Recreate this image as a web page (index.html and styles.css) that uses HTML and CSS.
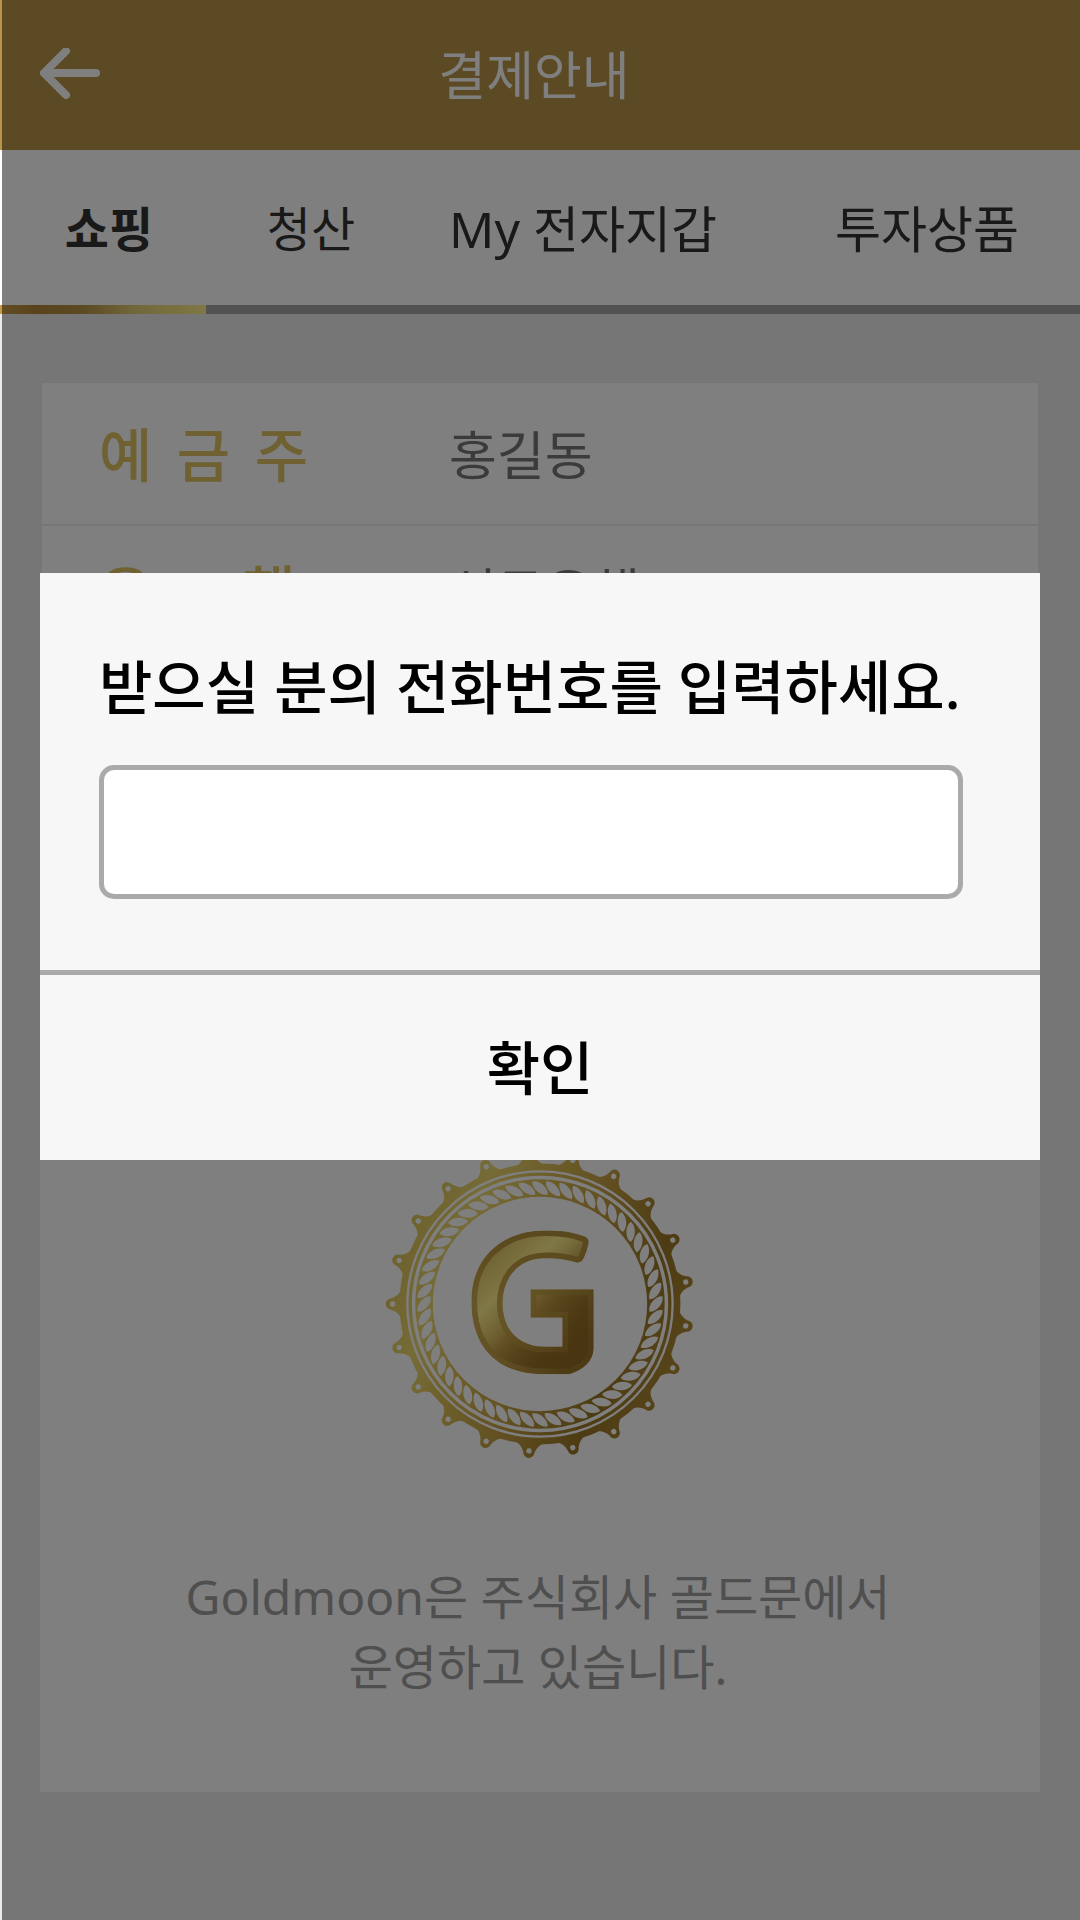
FILE: index.html
```html
<!DOCTYPE html>
<html lang="ko">
<head>
<meta charset="utf-8">
<meta name="viewport" content="width=device-width, initial-scale=1">
<title>결제안내</title>
<link rel="stylesheet" href="styles.css">
</head>
<body>
<header class="topbar">
  <button class="back" type="button" aria-label="뒤로">
    <svg viewBox="0 0 60 54" width="60" height="54" fill="none" stroke="#fff" stroke-width="8" stroke-linecap="round" stroke-linejoin="round">
      <path d="M56 25H5M26 3L4 25l22 22"/>
    </svg>
  </button>
  <h1 class="title">결제안내</h1>
</header>

<nav class="tabs">
  <a class="tab active" href="#shopping">쇼핑</a>
  <a class="tab" href="#clearing">청산</a>
  <a class="tab wide" href="#wallet">My 전자지갑</a>
  <a class="tab wide last" href="#invest">투자상품</a>
</nav>

<main class="content">
  <dl class="account">
    <div class="row"><dt>예 금 주</dt><dd>홍길동</dd></div>
    <div class="row"><dt class="spaced">은      행</dt><dd>신규은행</dd></div>
  </dl>

  <section class="company">
    <svg class="logo" viewBox="-468 -468 936 936" role="img" aria-label="Goldmoon">
      <defs>
        <linearGradient id="gold" gradientUnits="userSpaceOnUse" x1="-420" y1="-180" x2="420" y2="180">
          <stop offset="0" stop-color="#dcc45c"/>
          <stop offset=".18" stop-color="#ecd870"/>
          <stop offset=".35" stop-color="#dabc54"/>
          <stop offset=".55" stop-color="#c4a044"/>
          <stop offset=".8" stop-color="#9a7626"/>
          <stop offset="1" stop-color="#b08a34"/>
        </linearGradient>
        <linearGradient id="face" gradientUnits="userSpaceOnUse" x1="-190" y1="-130" x2="120" y2="190">
          <stop offset="0" stop-color="#dcc060"/>
          <stop offset=".27" stop-color="#fff08c"/>
          <stop offset=".55" stop-color="#c8a24a"/>
          <stop offset=".75" stop-color="#a67e30"/>
          <stop offset="1" stop-color="#9c7428"/>
        </linearGradient>
        <linearGradient id="bevel" gradientUnits="userSpaceOnUse" x1="0" y1="-222" x2="0" y2="212">
          <stop offset="0" stop-color="#b4903c"/>
          <stop offset=".5" stop-color="#ccaa4c"/>
          <stop offset=".85" stop-color="#c8a44a"/>
          <stop offset="1" stop-color="#d6b85a"/>
        </linearGradient>
        <linearGradient id="shade" gradientUnits="userSpaceOnUse" x1="-10" y1="-60" x2="162" y2="80">
          <stop offset="0" stop-color="#8e6820" stop-opacity="0"/>
          <stop offset="1" stop-color="#8e6820" stop-opacity=".8"/>
        </linearGradient>
        <g id="tooth">
          <path fill="#fff" d="M-48-416Q-24-426-17-449A17 17 0 0 1 17-449Q24-426 48-416Z"/>
          <circle cy="-445" r="8" fill="#000"/>
        </g>
        <g id="teeth3">
          <use href="#tooth"/>
          <use href="#tooth" transform="rotate(17.143)"/>
          <use href="#tooth" transform="rotate(34.286)"/>
        </g>
        <path id="leaf" d="M-23-370C2-374 26-347 23-330C-2-326-26-353-23-370Z"/>
        <g id="leaves7">
          <use href="#leaf"/>
          <use href="#leaf" transform="rotate(6.4286)"/>
          <use href="#leaf" transform="rotate(12.857)"/>
          <use href="#leaf" transform="rotate(19.286)"/>
          <use href="#leaf" transform="rotate(25.714)"/>
          <use href="#leaf" transform="rotate(32.143)"/>
          <use href="#leaf" transform="rotate(38.571)"/>
        </g>
        <mask id="seal" maskUnits="userSpaceOnUse" x="-468" y="-468" width="936" height="936">
          <g transform="rotate(-90)">
            <use href="#teeth3"/>
            <use href="#teeth3" transform="rotate(51.429)"/>
            <use href="#teeth3" transform="rotate(102.857)"/>
            <use href="#teeth3" transform="rotate(154.286)"/>
            <use href="#teeth3" transform="rotate(205.714)"/>
            <use href="#teeth3" transform="rotate(257.143)"/>
            <use href="#teeth3" transform="rotate(308.571)"/>
          </g>
          <g fill="none" stroke="#fff">
            <circle r="414" stroke-width="20"/>
            <circle r="392" stroke-width="10"/>
            <circle r="350" stroke-width="53"/>
          </g>
          <g fill="#000">
            <use href="#leaves7"/>
            <use href="#leaves7" transform="rotate(45)"/>
            <use href="#leaves7" transform="rotate(90)"/>
            <use href="#leaves7" transform="rotate(135)"/>
            <use href="#leaves7" transform="rotate(180)"/>
            <use href="#leaves7" transform="rotate(225)"/>
            <use href="#leaves7" transform="rotate(270)"/>
            <use href="#leaves7" transform="rotate(315)"/>
          </g>
        </mask>
        <path id="mark" d="M138-202Q149-196 146-183Q142-160 133-141Q125-122 108-126C75-136 45-140 8-138C-70-134-113-75-113-2C-113 78-65 129 15 129H68V41H-28V-44H162V135Q158 190 88 212H8C-140 210-207 120-207-8C-207-142-112-222 18-222C65-222 106-216 138-202Z"/>
        <clipPath id="markClip"><use href="#mark"/></clipPath>
      </defs>
      <rect x="-468" y="-468" width="936" height="936" fill="url(#gold)" mask="url(#seal)"/>
      <g clip-path="url(#markClip)">
        <use href="#mark" fill="url(#face)"/>
        <use href="#mark" fill="none" stroke="url(#bevel)" stroke-width="34"/>
        <use href="#mark" fill="url(#shade)"/>
      </g>
    </svg>
    <p class="about">Goldmoon은 주식회사 골드문에서<br>운영하고 있습니다.</p>
  </section>
</main>

<div class="overlay">
  <form class="dialog" role="dialog" aria-modal="true">
    <div class="dialog-body">
      <label class="prompt" for="phone">받으실 분의 전화번호를 입력하세요.</label>
      <input class="phone" id="phone" type="tel">
    </div>
    <button class="confirm" type="submit">확인</button>
  </form>
</div>
</body>
</html>
```
FILE: styles.css
```css
* {
  box-sizing: border-box;
}

body {
  position: relative;
  min-height: 100vh;
  margin: 0;
  background: #ececec;
  color: #333;
  font-family: "Noto Sans", "Noto Sans CJK KR", sans-serif;
  font-size: 48px;
  line-height: 70px;
}

button,
input {
  font: inherit;
  color: inherit;
}

/* Header */
.topbar {
  display: grid;
  grid-template-columns: 140px 1fr 152px;
  align-items: center;
  height: 150px;
  background: #b89548;
  color: #fff;
}

.back {
  display: flex;
  padding: 0 0 0 40px;
  border: 0;
  background: none;
}

.title {
  margin: 0;
  font-size: 52px;
  font-weight: 400;
  text-align: center;
}

/* Tabs */
.tabs {
  display: grid;
  grid-template-columns: 206fr 198fr 346fr 330fr;
  background: #fff;
}

.tab {
  height: 164px;
  padding: 44px 0 0 12px;
  border-bottom: 9px solid #a4a4a4;
  color: #333;
  text-align: center;
  text-decoration: none;
}

.tab.active {
  border-image: linear-gradient(90deg, #c89c48, #b08638 18%, #b89448 40%, #e4ce74 65%, #fff08c) 1;
  border-width: 0 0 9px;
  font-weight: 700;
}

.tab.wide {
  font-size: 50px;
}

.tab.last {
  padding-left: 24px;
}

/* Account details */
.content {
  padding: 69px 40px 125px;
}

.account {
  margin: 0 2px;
}

.row {
  display: flex;
  align-items: center;
  height: 143px;
  padding: 2px 0 0 57px;
  border-bottom: 2px solid #ececec;
  background: #fff;
}

.row:last-child {
  height: 131px;
}

.row dt {
  width: 209px;
  color: #dec265;
  font-size: 58px;
  font-weight: 500;
  text-align-last: justify;
}

.row .spaced {
  text-align-last: left;
  white-space: pre;
}

.row dd {
  margin: 0 0 0 141px;
  color: #777;
  font-size: 52px;
}

/* Company card */
.company {
  margin-top: 343px;
  padding: 149px 40px 90px;
  background: #fff;
  color: #9e9e9e;
  text-align: center;
}

.logo {
  display: block;
  width: 310px;
  height: 310px;
  margin: 0 auto 103px;
}

.about {
  margin: 0;
  padding-right: 4px;
}

/* Dialog */
.overlay {
  position: absolute;
  inset: 0 0 0 2px;
  padding: 573px 40px 0 38px;
  background: rgba(0, 0, 0, .5);
}

.dialog {
  background: #f7f7f7;
  color: #000;
  font-size: 58px;
  font-weight: 500;
}

.dialog-body {
  padding: 74px 77px 71px 59px;
}

.prompt {
  display: block;
  margin-bottom: 38px;
  line-height: 80px;
}

.phone {
  display: block;
  width: 100%;
  height: 134px;
  padding: 0 30px;
  border: 5px solid #aaa;
  border-radius: 15px;
  background: #fff;
}

.confirm {
  display: block;
  width: 100%;
  height: 190px;
  padding: 0;
  border: 0;
  border-top: 5px solid #aaa;
  background: none;
}
```
